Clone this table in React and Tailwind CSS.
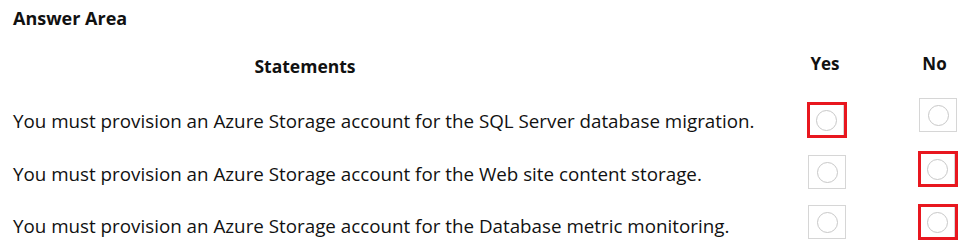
import React from "react";

const rows = [
  { text: "You must provision an Azure Storage account for the SQL Server database migration.", yes: true, no: false, tm: "mt-[13px]", yesMt: "mt-[6px]", noMt: "mt-[2px]" },
  { text: "You must provision an Azure Storage account for the Web site content storage.", yes: false, no: true, tm: "mt-[13px]", yesMt: "mt-[6px]", noMt: "mt-[2px]" },
  { text: "You must provision an Azure Storage account for the Database metric monitoring.", yes: false, no: true, tm: "mt-[12px]", yesMt: "mt-[3px]", noMt: "mt-[2px]" },
];

function Box({ selected, mt }) {
  if (selected) {
    return (
      <div className={`${mt} w-[40px] h-[36px] border-[3px] border-[#e8171f] flex`}>
        <div className="flex-1 flex items-center justify-center border-r border-[#d6d6d6]">
          <div className="w-[21px] h-[21px] rounded-full border-[1.5px] border-[#c8c8c8]" />
        </div>
      </div>
    );
  }
  return (
    <div className={`${mt} w-[38px] h-[34px] border border-[#d6d6d6] flex items-center justify-center`}>
      <div className="w-[21px] h-[21px] rounded-full border-[1.5px] border-[#c8c8c8]" />
    </div>
  );
}

export default function App() {
  return (
    <div className="w-[966px] h-[252px] bg-white text-[#111] overflow-hidden" style={{ fontFamily: '"Open Sans", sans-serif' }}>
      <div className="pl-[13px] pt-[6px] text-[18px] leading-[24px] font-bold">Answer Area</div>
      <div className="flex items-start h-[66px]">
        <div className="w-[610px] text-center text-[17.5px] leading-[24px] font-bold mt-[24px]">Statements</div>
        <div className="w-[197px]" />
        <div className="w-[40px] flex justify-center pr-[4px] text-[17px] leading-[24px] font-bold mt-[22px]">Yes</div>
        <div className="w-[71px]" />
        <div className="w-[40px] flex justify-center pr-[7px] text-[17px] leading-[24px] font-bold mt-[22px]">No</div>
      </div>
      {rows.map((r, i) => (
        <div key={i} className="flex items-start h-[53px]">
          <div className={`w-[807px] pl-[13px] text-[18.8px] leading-[24px] whitespace-nowrap ${r.tm}`}>{r.text}</div>
          <div className="w-[40px] flex justify-center"><Box selected={r.yes} mt={r.yesMt} /></div>
          <div className="w-[71px]" />
          <div className="w-[40px] flex justify-center"><Box selected={r.no} mt={r.noMt} /></div>
        </div>
      ))}
    </div>
  );
}
